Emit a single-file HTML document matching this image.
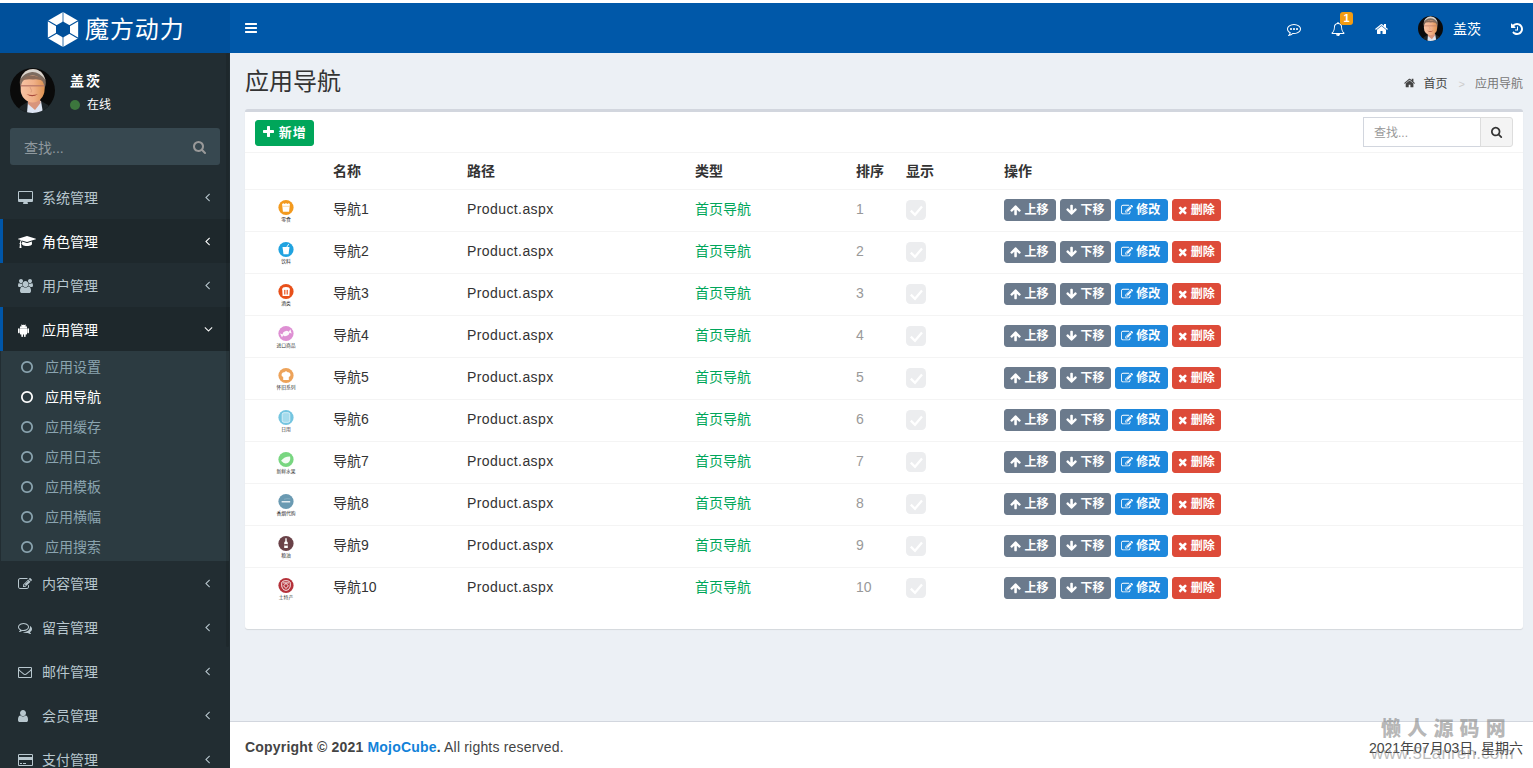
<!DOCTYPE html><html lang="zh-CN"><head><meta charset="utf-8"><title>应用导航</title><style>*{box-sizing:border-box;margin:0;padding:0}
html,body{width:1533px;height:768px;overflow:hidden;background:#fff}
body{font-family:"Liberation Sans","Noto Sans CJK SC",sans-serif;font-size:14px;color:#333;line-height:1.42857}
.wrap{position:absolute;left:0;top:3px;width:1538px;height:765px;background:#ecf0f5;overflow:hidden}
svg.fa{display:inline-block;vertical-align:-2px;overflow:visible}
/* header */
.hdr{position:absolute;left:0;top:0;width:1538px;height:50px;background:#0058a9}
.logo{position:absolute;left:0;top:0;width:230px;height:50px;background:#00509b}
.logo-ic{position:absolute;left:47px;top:8px}
.logo-tx{position:absolute;left:85px;top:10px;font-size:24px;line-height:34px;color:#fff;font-weight:400;letter-spacing:.9px;white-space:nowrap}
.navbar{position:absolute;left:0;top:-3px;width:1538px;height:53px}
.navbar .tog{position:absolute;left:245px;top:21px;line-height:14px}
.navbar .ni{position:absolute;line-height:14px}
.navbar svg.fa{vertical-align:top}
.badge{position:absolute;left:1340px;top:12px;width:13px;height:13px;background:#f39c12;color:#fff;border-radius:3px;font-size:11px;font-weight:700;line-height:13px;text-align:center}
.nav-av{position:absolute;left:1418px;top:16px;width:25px;height:25px}
.nav-av svg{display:block}
.nav-name{position:absolute;left:1453px;top:19px;color:#fff;font-size:14px;line-height:20px}
/* sidebar */
.side{position:absolute;left:0;top:50px;width:230px;height:715px;background:#222d32;overflow:hidden}
.user-img{position:absolute;left:10px;top:15px;width:45px;height:45px}
.user-img svg{display:block}
.user-name{position:absolute;left:70px;top:18px;color:#fff;font-weight:700;font-size:14px;line-height:20px;letter-spacing:2px}
.user-st{position:absolute;left:70px;top:44px;color:#fff;font-size:12px;line-height:16px}
.user-st .dot{display:inline-block;width:10px;height:10px;border-radius:50%;background:#3c763d;margin-right:7px;vertical-align:-1px}
.sform{position:absolute;left:10px;top:75px;width:210px;height:37px;background:#374850;border-radius:3px}
.sform .ph{position:absolute;left:14px;top:10px;color:#8f999e;font-size:14px;line-height:20px}
.sform .sb{position:absolute;left:183px;top:12px;color:#999;line-height:14px}
.sform .sb svg{vertical-align:top}
ul.menu{list-style:none;position:absolute;left:0;top:-53px;width:230px}
.mi{position:absolute;left:0;width:230px;height:44px;border-left:3px solid transparent;color:#b8c7ce}
.mi.act{background:#1e282c;border-left-color:#0056a8;color:#fff}
.mi .ico{position:absolute;left:15px;top:16px;width:20px;line-height:14px;text-align:left}
.mi .ico svg,.mi .arr svg,.si .ico svg{vertical-align:top}
.mi .tx{position:absolute;left:39px;top:13px;font-size:14px;line-height:20px}
.mi .arr{position:absolute;right:20px;top:15px;line-height:14px}
.subbg{position:absolute;left:1px;width:228px;background:#2c3b41}
.si{position:absolute;left:0;width:230px;height:30px;color:#8aa4af}
.si.act{color:#fff}
.si .ico{position:absolute;left:21px;top:9px;line-height:14px}
.si .tx{position:absolute;left:45px;top:6px;font-size:14px;line-height:20px}
/* content */
.cw{position:absolute;left:230px;top:50px;width:1308px;height:668px}
.ptitle{position:absolute;left:15px;top:12px;font-size:24px;font-weight:400;line-height:34px;color:#333}
.bc{position:absolute;right:15px;top:23px;font-size:12px;line-height:17px;color:#444;white-space:nowrap}
.bc svg{vertical-align:-1px;margin-right:8px}
.bc .b2{color:#ccc;margin:0 10px 0 11px;font-size:11px}
.bc .b3{color:#777}
.box{position:absolute;left:15px;top:56px;width:1278px;height:520px;background:#fff;border-top:3px solid #d2d6de;border-radius:3px;box-shadow:0 1px 1px rgba(0,0,0,.1)}
.bh{position:relative;height:41px;border-bottom:1px solid #f4f4f4}
.btn-add{position:absolute;left:10px;top:8px;height:26px;width:59px;background:#00a65a;border:1px solid #00a65a;border-radius:3px;color:#fff;font-weight:700;font-size:13px;line-height:24px;text-align:center;white-space:nowrap;letter-spacing:1px;padding-left:1px}
.srch{position:absolute;left:1118px;top:5px;width:150px;height:30px}
.sin{position:absolute;left:0;top:0;width:118px;height:30px;border:1px solid #d2d6de;border-right:0;font-size:12px;line-height:30px;padding-left:10px;color:#999;border-radius:0}
.sbt{position:absolute;left:117px;top:0;width:33px;height:30px;border:1px solid #ddd;background:#f4f4f4;border-radius:0 3px 3px 0;text-align:center;line-height:26px}
table.tb{border-collapse:collapse;width:1278px;table-layout:fixed}
.tb th,.tb td{text-align:left;padding:0 8px;vertical-align:middle;font-size:14px}
.tb th{height:36px;padding-top:2px;font-weight:700;color:#333;border-bottom:1px solid #f4f4f4}
.tb td{height:42px;border-top:1px solid #f4f4f4}
.tb .c0{width:80px;text-align:center}
.tb td.c2{letter-spacing:.41px}.tb .c1{width:134px}.tb .c2{width:228px}.tb .c3{width:161px}.tb .c4{width:50px}.tb .c5{width:98px}
.tb td.c3{color:#00a65a}
.tb td.c4{color:#999}
.chk{display:inline-block;vertical-align:middle}
.btn{display:inline-block;height:22px;line-height:20px;padding:0 0 0 5px;font-size:12px;font-weight:700;color:#fff;border-radius:3px;margin-right:4px;border:1px solid transparent;white-space:nowrap;vertical-align:middle}
.btn svg{vertical-align:-2px}
.b-gray{background:#6b7a8c;border-color:#6b7a8c}
.b-blue{background:#1e88dc;border-color:#1e88dc}
.b-red{background:#dd4b39;border-color:#dd4b39}
.nicon{display:block;margin:0 auto;position:relative;top:1px;left:1px}
/* footer */
.footer{position:absolute;left:230px;top:718px;width:1308px;height:50px;background:#fff;border-top:1px solid #d2d6de;color:#444;font-size:14px}
.footer .fl{position:absolute;left:15px;top:15px;line-height:20px;letter-spacing:.19px;white-space:nowrap}
.footer .lk{color:#1282d9}
.footer .fr{position:absolute;right:15px;top:16px;line-height:20px;white-space:nowrap}
.wm1{position:absolute;left:1151px;top:-7px;font-size:20px;font-weight:900;letter-spacing:6.2px;color:rgba(120,120,120,.55);white-space:nowrap;line-height:28px}
.wm2{position:absolute;left:1141px;top:21px;font-size:17px;letter-spacing:.2px;color:rgba(120,120,120,.5);white-space:nowrap;line-height:22px}
.sbar{position:absolute;left:226px;top:0;width:3px;height:594px;background:rgba(0,0,0,.11);border-radius:7px}
</style></head><body><div class="wrap"><div class="hdr"><div class="logo"><svg class="logo-ic" width="32" height="37" viewBox="-16 -18.5 32 37"><polygon points="0.00,-17.50 15.16,-8.75 15.16,8.75 0.00,17.50 -15.16,8.75 -15.16,-8.75" fill="#fff"/><polygon points="0.00,-8.10 7.01,-4.05 7.01,4.05 0.00,8.10 -7.01,4.05 -7.01,-4.05" fill="#00509b"/><line x1="0" y1="0" x2="0.00" y2="-18.00" stroke="#00509b" stroke-width="0.8"/><line x1="0" y1="0" x2="15.59" y2="-9.00" stroke="#00509b" stroke-width="1.1"/><line x1="0" y1="0" x2="15.59" y2="9.00" stroke="#00509b" stroke-width="1.1"/><line x1="0" y1="0" x2="0.00" y2="18.00" stroke="#00509b" stroke-width="0.8"/><line x1="0" y1="0" x2="-15.59" y2="9.00" stroke="#00509b" stroke-width="1.1"/><line x1="0" y1="0" x2="-15.59" y2="-9.00" stroke="#00509b" stroke-width="1.1"/></svg><span class="logo-tx">魔方动力</span></div><div class="navbar"><span class="tog"><svg class="fa" width="12.00" height="14" viewBox="0 0 1536 1792" style=""><path fill="#fff" d="M1536 1344V1472Q1536 1498 1517 1517Q1498 1536 1472 1536H64Q38 1536 19 1517Q0 1498 0 1472V1344Q0 1318 19 1299Q38 1280 64 1280H1472Q1498 1280 1517 1299Q1536 1318 1536 1344ZM1536 832V960Q1536 986 1517 1005Q1498 1024 1472 1024H64Q38 1024 19 1005Q0 986 0 960V832Q0 806 19 787Q38 768 64 768H1472Q1498 768 1517 787Q1536 806 1536 832ZM1536 320V448Q1536 474 1517 493Q1498 512 1472 512H64Q38 512 19 493Q0 474 0 448V320Q0 294 19 275Q38 256 64 256H1472Q1498 256 1517 275Q1536 294 1536 320Z"/></svg></span><span class="ni" style="left:1287px;top:22px"><svg class="fa" width="14.00" height="14" viewBox="0 0 1792 1792" style=""><path fill="#fff" d="M602 806Q640 843 640 896Q640 949 602 986Q565 1024 512 1024Q459 1024 422 986Q384 949 384 896Q384 843 422 806Q459 768 512 768Q565 768 602 806ZM986 806Q1024 843 1024 896Q1024 949 986 986Q949 1024 896 1024Q843 1024 806 986Q768 949 768 896Q768 843 806 806Q843 768 896 768Q949 768 986 806ZM1370 806Q1408 843 1408 896Q1408 949 1370 986Q1333 1024 1280 1024Q1227 1024 1190 986Q1152 949 1152 896Q1152 843 1190 806Q1227 768 1280 768Q1333 768 1370 806ZM128 896Q128 1008 200 1110Q271 1211 401 1285L488 1335L461 1431Q437 1522 391 1603Q543 1540 666 1432L709 1394L766 1400Q835 1408 896 1408Q1100 1408 1278 1338Q1455 1269 1560 1151Q1664 1033 1664 896Q1664 759 1560 641Q1455 523 1278 454Q1100 384 896 384Q692 384 514 454Q337 523 232 641Q128 759 128 896ZM1792 896Q1792 1070 1672 1218Q1552 1365 1346 1450Q1140 1536 896 1536Q826 1536 751 1528Q553 1703 291 1770Q242 1784 177 1792H172Q157 1792 145 1782Q133 1771 129 1754V1753Q126 1749 128 1741Q131 1733 130 1731Q130 1729 135 1722Q140 1714 141 1712Q142 1711 148 1704Q154 1697 156 1695Q163 1687 187 1660Q211 1634 222 1622Q232 1611 252 1583Q273 1555 285 1532Q297 1509 312 1473Q327 1437 338 1397Q181 1308 90 1177Q0 1046 0 896Q0 766 71 648Q142 529 262 443Q382 357 548 306Q714 256 896 256Q1078 256 1244 306Q1410 357 1530 443Q1650 529 1721 648Q1792 766 1792 896Z"/></svg></span><span class="ni" style="left:1331px;top:22px"><svg class="fa" width="14.00" height="14" viewBox="0 0 1792 1792" style=""><path fill="#fff" d="M896 1680Q837 1680 794 1638Q752 1595 752 1536Q752 1520 736 1520Q720 1520 720 1536Q720 1609 772 1660Q823 1712 896 1712Q912 1712 912 1696Q912 1680 896 1680ZM246 1408H1546Q1280 1108 1280 576Q1280 525 1256 471Q1232 417 1187 368Q1142 319 1066 288Q989 256 896 256Q803 256 726 288Q650 319 605 368Q560 417 536 471Q512 525 512 576Q512 1108 246 1408ZM1728 1408Q1728 1460 1690 1498Q1652 1536 1600 1536H1152Q1152 1642 1077 1717Q1002 1792 896 1792Q790 1792 715 1717Q640 1642 640 1536H192Q140 1536 102 1498Q64 1460 64 1408Q114 1366 155 1320Q196 1274 240 1200Q284 1127 314 1042Q345 957 364 836Q384 715 384 576Q384 424 501 294Q618 163 808 135Q800 116 800 96Q800 56 828 28Q856 0 896 0Q936 0 964 28Q992 56 992 96Q992 116 984 135Q1174 163 1291 294Q1408 424 1408 576Q1408 715 1428 836Q1447 957 1478 1042Q1508 1127 1552 1200Q1596 1274 1637 1320Q1678 1366 1728 1408Z"/></svg></span><span class="badge">1</span><span class="ni" style="left:1375px;top:22px"><svg class="fa" width="13.00" height="14" viewBox="0 0 1664 1792" style=""><path fill="#fff" d="M1408 992V1472Q1408 1498 1389 1517Q1370 1536 1344 1536H960V1152H704V1536H320Q294 1536 275 1517Q256 1498 256 1472V992Q256 991 256 989Q257 987 257 986L832 512L1407 986Q1408 988 1408 992ZM1631 923 1569 997Q1561 1006 1548 1008H1545Q1532 1008 1524 1001L832 424L140 1001Q128 1009 116 1008Q103 1006 95 997L33 923Q25 913 26 900Q27 886 37 878L756 279Q788 253 832 253Q876 253 908 279L1152 483V288Q1152 274 1161 265Q1170 256 1184 256H1376Q1390 256 1399 265Q1408 274 1408 288V696L1627 878Q1637 886 1638 900Q1639 913 1631 923Z"/></svg></span><span class="nav-av"><svg class="avatar na" width="25" height="25" viewBox="0 0 45 45"><defs><clipPath id="cna"><circle cx="22.5" cy="22.5" r="22.5"/></clipPath><linearGradient id="gna" x1="0" x2="1" y1="0" y2="0"><stop offset="0" stop-color="#f7c3a4"/><stop offset=".55" stop-color="#f0b088"/><stop offset="1" stop-color="#dc9250"/></linearGradient></defs><g clip-path="url(#cna)"><rect width="45" height="45" fill="#0a0a0a"/><path d="M5 45 L11 38 L19 33 L31 33 L38 37 L43 45 Z" fill="#1d2428"/><path d="M17 45 L18 33 L31 33 L33 45 Z" fill="#dde5f3"/><path d="M18 29 L30 29 L30.5 35 L25 42 L18 36 Z" fill="#d8957c"/><ellipse cx="22.8" cy="14.5" rx="13" ry="13.5" fill="#7d6c60"/><path d="M10.5 11 Q14 1 23 1 Q32 1 35.5 12 Q29 3.5 22 4 Q15 4.5 10.5 11 Z" fill="#d8d3cc"/><ellipse cx="22.6" cy="21" rx="12" ry="13.6" fill="url(#gna)"/><path d="M11 13 Q16 6.5 23 8 Q30 7 34.5 14 Q30 10.5 23 11.5 Q16 10.5 11 13 Z" fill="#8a6a58"/><rect x="10.5" y="17" width="24" height="1.5" rx=".7" fill="#b87868" opacity=".85"/><path d="M16.5 26 Q22 30.5 28 26 Q22 28 16.5 26Z" fill="#a84a3c"/><path d="M20 19 Q22.5 23 21 24.5" stroke="#d89a78" stroke-width=".9" fill="none"/></g></svg></span><span class="nav-name">盖茨</span><span class="ni" style="left:1511px;top:22px"><svg class="fa" width="12.00" height="14" viewBox="0 0 1536 1792" style=""><path fill="#fff" d="M768 1664Q596 1664 441 1592Q286 1519 177 1387Q170 1377 170 1364Q171 1352 179 1344L316 1206Q326 1197 341 1197Q357 1199 364 1209Q437 1304 543 1356Q649 1408 768 1408Q872 1408 966 1368Q1061 1327 1130 1258Q1199 1189 1240 1094Q1280 1000 1280 896Q1280 792 1240 698Q1199 603 1130 534Q1061 465 966 424Q872 384 768 384Q670 384 580 420Q490 455 420 521L557 659Q588 689 571 728Q554 768 512 768H64Q38 768 19 749Q0 730 0 704V256Q0 214 40 197Q79 180 109 211L239 340Q346 239 484 184Q621 128 768 128Q924 128 1066 189Q1208 250 1311 353Q1414 456 1475 598Q1536 740 1536 896Q1536 1052 1475 1194Q1414 1336 1311 1439Q1208 1542 1066 1603Q924 1664 768 1664ZM896 608V1056Q896 1070 887 1079Q878 1088 864 1088H544Q530 1088 521 1079Q512 1070 512 1056V992Q512 978 521 969Q530 960 544 960H768V608Q768 594 777 585Q786 576 800 576H864Q878 576 887 585Q896 594 896 608Z"/></svg></span></div></div><div class="side"><div class="user-img"><svg class="avatar ua" width="45" height="45" viewBox="0 0 45 45"><defs><clipPath id="cua"><circle cx="22.5" cy="22.5" r="22.5"/></clipPath><linearGradient id="gua" x1="0" x2="1" y1="0" y2="0"><stop offset="0" stop-color="#f7c3a4"/><stop offset=".55" stop-color="#f0b088"/><stop offset="1" stop-color="#dc9250"/></linearGradient></defs><g clip-path="url(#cua)"><rect width="45" height="45" fill="#0a0a0a"/><path d="M5 45 L11 38 L19 33 L31 33 L38 37 L43 45 Z" fill="#1d2428"/><path d="M17 45 L18 33 L31 33 L33 45 Z" fill="#dde5f3"/><path d="M18 29 L30 29 L30.5 35 L25 42 L18 36 Z" fill="#d8957c"/><ellipse cx="22.8" cy="14.5" rx="13" ry="13.5" fill="#7d6c60"/><path d="M10.5 11 Q14 1 23 1 Q32 1 35.5 12 Q29 3.5 22 4 Q15 4.5 10.5 11 Z" fill="#d8d3cc"/><ellipse cx="22.6" cy="21" rx="12" ry="13.6" fill="url(#gua)"/><path d="M11 13 Q16 6.5 23 8 Q30 7 34.5 14 Q30 10.5 23 11.5 Q16 10.5 11 13 Z" fill="#8a6a58"/><rect x="10.5" y="17" width="24" height="1.5" rx=".7" fill="#b87868" opacity=".85"/><path d="M16.5 26 Q22 30.5 28 26 Q22 28 16.5 26Z" fill="#a84a3c"/><path d="M20 19 Q22.5 23 21 24.5" stroke="#d89a78" stroke-width=".9" fill="none"/></g></svg></div><div class="user-name">盖茨</div><div class="user-st"><span class="dot"></span>在线</div><div class="sform"><span class="ph">查找...</span><span class="sb"><svg class="fa" width="13.00" height="14" viewBox="0 0 1664 1792" style=""><path fill="currentColor" d="M1020 1148Q1152 1017 1152 832Q1152 647 1020 516Q889 384 704 384Q519 384 388 516Q256 647 256 832Q256 1017 388 1148Q519 1280 704 1280Q889 1280 1020 1148ZM1664 1664Q1664 1716 1626 1754Q1588 1792 1536 1792Q1482 1792 1446 1754L1103 1412Q924 1536 704 1536Q561 1536 430 1480Q300 1425 206 1330Q111 1236 56 1106Q0 975 0 832Q0 689 56 558Q111 428 206 334Q300 239 430 184Q561 128 704 128Q847 128 978 184Q1108 239 1202 334Q1297 428 1352 558Q1408 689 1408 832Q1408 1052 1284 1231L1627 1574Q1664 1611 1664 1664Z"/></svg></span></div><ul class="menu"><li class="mi" style="top:175px"><span class="ico"><svg class="fa" width="15.00" height="14" viewBox="0 0 1920 1792" style=""><path fill="currentColor" d="M1792 992V160Q1792 147 1782 138Q1773 128 1760 128H160Q147 128 138 138Q128 147 128 160V992Q128 1005 138 1014Q147 1024 160 1024H1760Q1773 1024 1782 1014Q1792 1005 1792 992ZM1920 160V1248Q1920 1314 1873 1361Q1826 1408 1760 1408H1216Q1216 1445 1232 1486Q1248 1526 1264 1556Q1280 1587 1280 1600Q1280 1626 1261 1645Q1242 1664 1216 1664H704Q678 1664 659 1645Q640 1626 640 1600Q640 1586 656 1556Q672 1526 688 1486Q704 1446 704 1408H160Q94 1408 47 1361Q0 1314 0 1248V160Q0 94 47 47Q94 0 160 0H1760Q1826 0 1873 47Q1920 94 1920 160Z"/></svg></span><span class="tx">系统管理</span><span class="arr"><svg class="fa" width="5.00" height="14" viewBox="0 0 640 1792" style=""><path fill="currentColor" d="M617 567 224 960 617 1353Q627 1363 627 1376Q627 1389 617 1399L567 1449Q557 1459 544 1459Q531 1459 521 1449L55 983Q45 973 45 960Q45 947 55 937L521 471Q531 461 544 461Q557 461 567 471L617 521Q627 531 627 544Q627 557 617 567Z"/></svg></span></li><li class="mi act" style="top:219px"><span class="ico"><svg class="fa" width="18.00" height="14" viewBox="0 0 2304 1792" style=""><path fill="currentColor" d="M1774 836 1792 1152Q1796 1221 1710 1280Q1624 1339 1475 1374Q1326 1408 1152 1408Q978 1408 829 1374Q680 1339 594 1280Q508 1221 512 1152L530 836L1104 1017Q1126 1024 1152 1024Q1178 1024 1200 1017ZM2282 543 1162 895Q1158 896 1152 896Q1146 896 1142 895L490 689Q447 723 419 800Q391 878 385 979Q448 1015 448 1088Q448 1157 390 1195L448 1628Q450 1642 440 1653Q431 1664 416 1664H224Q209 1664 200 1653Q190 1642 192 1628L250 1195Q192 1157 192 1088Q192 1015 257 977Q268 770 355 647L22 543Q0 535 0 512Q0 489 22 481L1142 129Q1146 128 1152 128Q1158 128 1162 129L2282 481Q2304 489 2304 512Q2304 535 2282 543Z"/></svg></span><span class="tx">角色管理</span><span class="arr"><svg class="fa" width="5.00" height="14" viewBox="0 0 640 1792" style=""><path fill="currentColor" d="M617 567 224 960 617 1353Q627 1363 627 1376Q627 1389 617 1399L567 1449Q557 1459 544 1459Q531 1459 521 1449L55 983Q45 973 45 960Q45 947 55 937L521 471Q531 461 544 461Q557 461 567 471L617 521Q627 531 627 544Q627 557 617 567Z"/></svg></span></li><li class="mi" style="top:263px"><span class="ico"><svg class="fa" width="15.00" height="14" viewBox="0 0 1920 1792" style=""><path fill="currentColor" d="M593 896Q431 901 328 1024H194Q112 1024 56 984Q0 943 0 865Q0 512 124 512Q130 512 168 533Q205 554 265 576Q325 597 384 597Q451 597 517 574Q512 611 512 640Q512 779 593 896ZM1664 1533Q1664 1653 1591 1722Q1518 1792 1397 1792H523Q402 1792 329 1722Q256 1653 256 1533Q256 1480 260 1430Q263 1379 274 1320Q284 1262 300 1212Q316 1162 343 1114Q370 1067 405 1034Q440 1000 490 980Q541 960 602 960Q612 960 645 982Q678 1003 718 1030Q758 1056 825 1078Q892 1099 960 1099Q1028 1099 1095 1078Q1162 1056 1202 1030Q1242 1003 1275 982Q1308 960 1318 960Q1379 960 1430 980Q1480 1000 1515 1034Q1550 1067 1577 1114Q1604 1162 1620 1212Q1636 1262 1646 1320Q1657 1379 1660 1430Q1664 1480 1664 1533ZM565 75Q640 150 640 256Q640 362 565 437Q490 512 384 512Q278 512 203 437Q128 362 128 256Q128 150 203 75Q278 0 384 0Q490 0 565 75ZM1232 368Q1344 481 1344 640Q1344 799 1232 912Q1119 1024 960 1024Q801 1024 688 912Q576 799 576 640Q576 481 688 368Q801 256 960 256Q1119 256 1232 368ZM1920 865Q1920 943 1864 984Q1808 1024 1726 1024H1592Q1489 901 1327 896Q1408 779 1408 640Q1408 611 1403 574Q1469 597 1536 597Q1595 597 1655 576Q1715 554 1752 533Q1790 512 1796 512Q1920 512 1920 865ZM1717 75Q1792 150 1792 256Q1792 362 1717 437Q1642 512 1536 512Q1430 512 1355 437Q1280 362 1280 256Q1280 150 1355 75Q1430 0 1536 0Q1642 0 1717 75Z"/></svg></span><span class="tx">用户管理</span><span class="arr"><svg class="fa" width="5.00" height="14" viewBox="0 0 640 1792" style=""><path fill="currentColor" d="M617 567 224 960 617 1353Q627 1363 627 1376Q627 1389 617 1399L567 1449Q557 1459 544 1459Q531 1459 521 1449L55 983Q45 973 45 960Q45 947 55 937L521 471Q531 461 544 461Q557 461 567 471L617 521Q627 531 627 544Q627 557 617 567Z"/></svg></span></li><li class="mi act" style="top:307px"><span class="ico"><svg class="fa" width="11.00" height="14" viewBox="0 0 1408 1792" style=""><path fill="currentColor" d="M466 472Q477 483 493 483Q509 483 520 472Q532 460 532 444Q532 428 520 416Q509 405 493 405Q477 405 466 416Q455 428 455 444Q455 460 466 472ZM888 472Q899 483 915 483Q931 483 942 472Q953 460 953 444Q953 428 942 416Q931 405 915 405Q899 405 888 416Q876 428 876 444Q876 460 888 472ZM103 667Q145 667 175 697Q205 727 205 769V1199Q205 1242 176 1272Q146 1302 103 1302Q60 1302 30 1272Q0 1242 0 1199V769Q0 727 30 697Q60 667 103 667ZM1163 686V1352Q1163 1398 1131 1430Q1099 1462 1054 1462H979V1689Q979 1732 949 1762Q919 1792 876 1792Q833 1792 803 1762Q773 1732 773 1689V1462H635V1689Q635 1732 605 1762Q575 1792 532 1792Q490 1792 460 1762Q430 1732 430 1689L429 1462H355Q309 1462 277 1430Q245 1398 245 1352V686ZM931 281Q1038 336 1102 434Q1166 533 1166 650H241Q241 533 305 434Q369 336 477 281L406 150Q399 137 411 130Q424 124 431 136L503 268Q598 226 704 226Q810 226 905 268L977 136Q984 124 997 130Q1009 137 1002 150ZM1408 769V1199Q1408 1242 1378 1272Q1348 1302 1305 1302Q1263 1302 1233 1272Q1203 1242 1203 1199V769Q1203 726 1233 696Q1263 667 1305 667Q1348 667 1378 696Q1408 726 1408 769Z"/></svg></span><span class="tx">应用管理</span><span class="arr"><svg class="fa" width="9.00" height="14" viewBox="0 0 1152 1792" style="margin-right:-2.5px"><path fill="currentColor" d="M1065 759 599 1225Q589 1235 576 1235Q563 1235 553 1225L87 759Q77 749 77 736Q77 723 87 713L137 663Q147 653 160 653Q173 653 183 663L576 1056L969 663Q979 653 992 653Q1005 653 1015 663L1065 713Q1075 723 1075 736Q1075 749 1065 759Z"/></svg></span></li><li class="subbg" style="top:351px;height:210px"></li><li class="si" style="top:351px"><span class="ico"><svg class="fa" width="12.00" height="14" viewBox="0 0 1536 1792" style=""><path fill="currentColor" d="M1041 425Q916 352 768 352Q620 352 495 425Q370 498 297 623Q224 748 224 896Q224 1044 297 1169Q370 1294 495 1367Q620 1440 768 1440Q916 1440 1041 1367Q1166 1294 1239 1169Q1312 1044 1312 896Q1312 748 1239 623Q1166 498 1041 425ZM1433 510Q1536 687 1536 896Q1536 1105 1433 1282Q1330 1458 1154 1561Q977 1664 768 1664Q559 1664 382 1561Q206 1458 103 1282Q0 1105 0 896Q0 687 103 510Q206 334 382 231Q559 128 768 128Q977 128 1154 231Q1330 334 1433 510Z"/></svg></span><span class="tx">应用设置</span></li><li class="si act" style="top:381px"><span class="ico"><svg class="fa" width="12.00" height="14" viewBox="0 0 1536 1792" style=""><path fill="currentColor" d="M1041 425Q916 352 768 352Q620 352 495 425Q370 498 297 623Q224 748 224 896Q224 1044 297 1169Q370 1294 495 1367Q620 1440 768 1440Q916 1440 1041 1367Q1166 1294 1239 1169Q1312 1044 1312 896Q1312 748 1239 623Q1166 498 1041 425ZM1433 510Q1536 687 1536 896Q1536 1105 1433 1282Q1330 1458 1154 1561Q977 1664 768 1664Q559 1664 382 1561Q206 1458 103 1282Q0 1105 0 896Q0 687 103 510Q206 334 382 231Q559 128 768 128Q977 128 1154 231Q1330 334 1433 510Z"/></svg></span><span class="tx">应用导航</span></li><li class="si" style="top:411px"><span class="ico"><svg class="fa" width="12.00" height="14" viewBox="0 0 1536 1792" style=""><path fill="currentColor" d="M1041 425Q916 352 768 352Q620 352 495 425Q370 498 297 623Q224 748 224 896Q224 1044 297 1169Q370 1294 495 1367Q620 1440 768 1440Q916 1440 1041 1367Q1166 1294 1239 1169Q1312 1044 1312 896Q1312 748 1239 623Q1166 498 1041 425ZM1433 510Q1536 687 1536 896Q1536 1105 1433 1282Q1330 1458 1154 1561Q977 1664 768 1664Q559 1664 382 1561Q206 1458 103 1282Q0 1105 0 896Q0 687 103 510Q206 334 382 231Q559 128 768 128Q977 128 1154 231Q1330 334 1433 510Z"/></svg></span><span class="tx">应用缓存</span></li><li class="si" style="top:441px"><span class="ico"><svg class="fa" width="12.00" height="14" viewBox="0 0 1536 1792" style=""><path fill="currentColor" d="M1041 425Q916 352 768 352Q620 352 495 425Q370 498 297 623Q224 748 224 896Q224 1044 297 1169Q370 1294 495 1367Q620 1440 768 1440Q916 1440 1041 1367Q1166 1294 1239 1169Q1312 1044 1312 896Q1312 748 1239 623Q1166 498 1041 425ZM1433 510Q1536 687 1536 896Q1536 1105 1433 1282Q1330 1458 1154 1561Q977 1664 768 1664Q559 1664 382 1561Q206 1458 103 1282Q0 1105 0 896Q0 687 103 510Q206 334 382 231Q559 128 768 128Q977 128 1154 231Q1330 334 1433 510Z"/></svg></span><span class="tx">应用日志</span></li><li class="si" style="top:471px"><span class="ico"><svg class="fa" width="12.00" height="14" viewBox="0 0 1536 1792" style=""><path fill="currentColor" d="M1041 425Q916 352 768 352Q620 352 495 425Q370 498 297 623Q224 748 224 896Q224 1044 297 1169Q370 1294 495 1367Q620 1440 768 1440Q916 1440 1041 1367Q1166 1294 1239 1169Q1312 1044 1312 896Q1312 748 1239 623Q1166 498 1041 425ZM1433 510Q1536 687 1536 896Q1536 1105 1433 1282Q1330 1458 1154 1561Q977 1664 768 1664Q559 1664 382 1561Q206 1458 103 1282Q0 1105 0 896Q0 687 103 510Q206 334 382 231Q559 128 768 128Q977 128 1154 231Q1330 334 1433 510Z"/></svg></span><span class="tx">应用模板</span></li><li class="si" style="top:501px"><span class="ico"><svg class="fa" width="12.00" height="14" viewBox="0 0 1536 1792" style=""><path fill="currentColor" d="M1041 425Q916 352 768 352Q620 352 495 425Q370 498 297 623Q224 748 224 896Q224 1044 297 1169Q370 1294 495 1367Q620 1440 768 1440Q916 1440 1041 1367Q1166 1294 1239 1169Q1312 1044 1312 896Q1312 748 1239 623Q1166 498 1041 425ZM1433 510Q1536 687 1536 896Q1536 1105 1433 1282Q1330 1458 1154 1561Q977 1664 768 1664Q559 1664 382 1561Q206 1458 103 1282Q0 1105 0 896Q0 687 103 510Q206 334 382 231Q559 128 768 128Q977 128 1154 231Q1330 334 1433 510Z"/></svg></span><span class="tx">应用横幅</span></li><li class="si" style="top:531px"><span class="ico"><svg class="fa" width="12.00" height="14" viewBox="0 0 1536 1792" style=""><path fill="currentColor" d="M1041 425Q916 352 768 352Q620 352 495 425Q370 498 297 623Q224 748 224 896Q224 1044 297 1169Q370 1294 495 1367Q620 1440 768 1440Q916 1440 1041 1367Q1166 1294 1239 1169Q1312 1044 1312 896Q1312 748 1239 623Q1166 498 1041 425ZM1433 510Q1536 687 1536 896Q1536 1105 1433 1282Q1330 1458 1154 1561Q977 1664 768 1664Q559 1664 382 1561Q206 1458 103 1282Q0 1105 0 896Q0 687 103 510Q206 334 382 231Q559 128 768 128Q977 128 1154 231Q1330 334 1433 510Z"/></svg></span><span class="tx">应用搜索</span></li><li class="mi" style="top:561px"><span class="ico"><svg class="fa" width="14.00" height="14" viewBox="0 0 1792 1792" style=""><path fill="currentColor" d="M888 1184 1004 1068 852 916 736 1032V1088H832V1184ZM1295 465 945 815Q928 832 944 848Q960 864 977 847L1327 497Q1344 480 1328 464Q1312 448 1295 465ZM1408 1058V1248Q1408 1367 1324 1452Q1239 1536 1120 1536H288Q169 1536 84 1452Q0 1367 0 1248V416Q0 297 84 212Q169 128 288 128H1120Q1183 128 1237 153Q1252 160 1255 176Q1258 193 1246 205L1197 254Q1183 268 1165 262Q1142 256 1120 256H288Q222 256 175 303Q128 350 128 416V1248Q128 1314 175 1361Q222 1408 288 1408H1120Q1186 1408 1233 1361Q1280 1314 1280 1248V1122Q1280 1109 1289 1100L1353 1036Q1368 1021 1388 1029Q1408 1037 1408 1058ZM1312 320 1600 608 928 1280H640V992ZM1756 452 1664 544 1376 256 1468 164Q1496 136 1536 136Q1576 136 1604 164L1756 316Q1784 344 1784 384Q1784 424 1756 452Z"/></svg></span><span class="tx">内容管理</span><span class="arr"><svg class="fa" width="5.00" height="14" viewBox="0 0 640 1792" style=""><path fill="currentColor" d="M617 567 224 960 617 1353Q627 1363 627 1376Q627 1389 617 1399L567 1449Q557 1459 544 1459Q531 1459 521 1449L55 983Q45 973 45 960Q45 947 55 937L521 471Q531 461 544 461Q557 461 567 471L617 521Q627 531 627 544Q627 557 617 567Z"/></svg></span></li><li class="mi" style="top:605px"><span class="ico"><svg class="fa" width="14.00" height="14" viewBox="0 0 1792 1792" style=""><path fill="currentColor" d="M128 768Q128 850 181 926Q234 1002 330 1058L427 1114L392 1198Q426 1178 454 1159L498 1128L551 1138Q629 1152 704 1152Q857 1152 990 1100Q1123 1048 1202 959Q1280 870 1280 768Q1280 666 1202 577Q1123 488 990 436Q857 384 704 384Q551 384 418 436Q285 488 206 577Q128 666 128 768ZM704 1280Q618 1280 528 1264Q404 1352 250 1392Q214 1401 164 1408H161Q150 1408 140 1400Q131 1392 129 1379Q128 1376 128 1372Q128 1369 128 1366Q129 1363 130 1360Q132 1357 133 1355Q134 1353 136 1350Q139 1346 140 1344Q142 1343 145 1340Q148 1336 149 1335Q154 1329 172 1310Q190 1291 198 1280Q206 1270 220 1252Q235 1233 246 1213Q256 1193 266 1169Q142 1097 71 992Q0 887 0 768Q0 629 94 511Q188 393 350 324Q513 256 704 256Q895 256 1058 324Q1220 393 1314 511Q1408 629 1408 768Q1408 907 1314 1025Q1220 1143 1058 1212Q895 1280 704 1280ZM1526 1425Q1536 1449 1546 1469Q1557 1489 1572 1508Q1586 1526 1594 1536Q1602 1547 1620 1566Q1638 1585 1643 1591Q1644 1592 1647 1596Q1650 1599 1652 1600Q1653 1602 1656 1606Q1658 1609 1659 1611Q1660 1613 1662 1616Q1663 1619 1664 1622Q1664 1625 1664 1628Q1664 1632 1663 1635Q1660 1649 1650 1657Q1640 1665 1628 1664Q1578 1657 1542 1648Q1388 1608 1264 1520Q1174 1536 1088 1536Q817 1536 616 1404Q674 1408 704 1408Q865 1408 1013 1363Q1161 1318 1277 1234Q1402 1142 1469 1022Q1536 902 1536 768Q1536 691 1513 616Q1642 687 1717 794Q1792 901 1792 1024Q1792 1144 1721 1248Q1650 1353 1526 1425Z"/></svg></span><span class="tx">留言管理</span><span class="arr"><svg class="fa" width="5.00" height="14" viewBox="0 0 640 1792" style=""><path fill="currentColor" d="M617 567 224 960 617 1353Q627 1363 627 1376Q627 1389 617 1399L567 1449Q557 1459 544 1459Q531 1459 521 1449L55 983Q45 973 45 960Q45 947 55 937L521 471Q531 461 544 461Q557 461 567 471L617 521Q627 531 627 544Q627 557 617 567Z"/></svg></span></li><li class="mi" style="top:649px"><span class="ico"><svg class="fa" width="14.00" height="14" viewBox="0 0 1792 1792" style=""><path fill="currentColor" d="M1664 1504V736Q1632 772 1595 802Q1327 1008 1169 1140Q1118 1183 1086 1207Q1054 1231 1000 1256Q945 1280 897 1280H896H895Q847 1280 792 1256Q738 1231 706 1207Q674 1183 623 1140Q465 1008 197 802Q160 772 128 736V1504Q128 1517 138 1526Q147 1536 160 1536H1632Q1645 1536 1654 1526Q1664 1517 1664 1504ZM1664 453Q1664 451 1664 442Q1664 433 1664 428Q1664 424 1664 416Q1663 407 1660 403Q1658 399 1655 394Q1652 389 1646 386Q1640 384 1632 384H160Q147 384 138 394Q128 403 128 416Q128 584 275 700Q468 852 676 1017Q682 1022 711 1046Q740 1071 757 1084Q774 1097 802 1116Q829 1134 852 1143Q875 1152 895 1152H896H897Q917 1152 940 1143Q963 1134 990 1116Q1018 1097 1035 1084Q1052 1071 1081 1046Q1110 1022 1116 1017Q1324 852 1517 700Q1571 657 1618 584Q1664 512 1664 453ZM1792 416V1504Q1792 1570 1745 1617Q1698 1664 1632 1664H160Q94 1664 47 1617Q0 1570 0 1504V416Q0 350 47 303Q94 256 160 256H1632Q1698 256 1745 303Q1792 350 1792 416Z"/></svg></span><span class="tx">邮件管理</span><span class="arr"><svg class="fa" width="5.00" height="14" viewBox="0 0 640 1792" style=""><path fill="currentColor" d="M617 567 224 960 617 1353Q627 1363 627 1376Q627 1389 617 1399L567 1449Q557 1459 544 1459Q531 1459 521 1449L55 983Q45 973 45 960Q45 947 55 937L521 471Q531 461 544 461Q557 461 567 471L617 521Q627 531 627 544Q627 557 617 567Z"/></svg></span></li><li class="mi" style="top:693px"><span class="ico"><svg class="fa" width="10.00" height="14" viewBox="0 0 1280 1792" style=""><path fill="currentColor" d="M1280 1399Q1280 1508 1218 1586Q1155 1664 1067 1664H213Q125 1664 62 1586Q0 1508 0 1399Q0 1314 8 1238Q17 1163 40 1086Q63 1010 98 956Q134 901 192 866Q251 832 327 832Q458 960 640 960Q822 960 953 832Q1029 832 1088 866Q1146 901 1182 956Q1217 1010 1240 1086Q1263 1163 1272 1238Q1280 1314 1280 1399ZM912 240Q1024 353 1024 512Q1024 671 912 784Q799 896 640 896Q481 896 368 784Q256 671 256 512Q256 353 368 240Q481 128 640 128Q799 128 912 240Z"/></svg></span><span class="tx">会员管理</span><span class="arr"><svg class="fa" width="5.00" height="14" viewBox="0 0 640 1792" style=""><path fill="currentColor" d="M617 567 224 960 617 1353Q627 1363 627 1376Q627 1389 617 1399L567 1449Q557 1459 544 1459Q531 1459 521 1449L55 983Q45 973 45 960Q45 947 55 937L521 471Q531 461 544 461Q557 461 567 471L617 521Q627 531 627 544Q627 557 617 567Z"/></svg></span></li><li class="mi" style="top:737px"><span class="ico"><svg class="fa" width="15.00" height="14" viewBox="0 0 1920 1792" style=""><path fill="currentColor" d="M1760 128Q1826 128 1873 175Q1920 222 1920 288V1504Q1920 1570 1873 1617Q1826 1664 1760 1664H160Q94 1664 47 1617Q0 1570 0 1504V288Q0 222 47 175Q94 128 160 128ZM160 256Q147 256 138 266Q128 275 128 288V512H1792V288Q1792 275 1782 266Q1773 256 1760 256ZM1760 1536Q1773 1536 1782 1526Q1792 1517 1792 1504V896H128V1504Q128 1517 138 1526Q147 1536 160 1536ZM256 1408V1280H512V1408ZM640 1408V1280H1024V1408Z"/></svg></span><span class="tx">支付管理</span><span class="arr"><svg class="fa" width="5.00" height="14" viewBox="0 0 640 1792" style=""><path fill="currentColor" d="M617 567 224 960 617 1353Q627 1363 627 1376Q627 1389 617 1399L567 1449Q557 1459 544 1459Q531 1459 521 1449L55 983Q45 973 45 960Q45 947 55 937L521 471Q531 461 544 461Q557 461 567 471L617 521Q627 531 627 544Q627 557 617 567Z"/></svg></span></li></ul><div class="sbar"></div></div><div class="cw"><h1 class="ptitle">应用导航</h1><div class="bc"><svg class="fa" width="11.14" height="12" viewBox="0 0 1664 1792" style=""><path fill="#444" d="M1408 992V1472Q1408 1498 1389 1517Q1370 1536 1344 1536H960V1152H704V1536H320Q294 1536 275 1517Q256 1498 256 1472V992Q256 991 256 989Q257 987 257 986L832 512L1407 986Q1408 988 1408 992ZM1631 923 1569 997Q1561 1006 1548 1008H1545Q1532 1008 1524 1001L832 424L140 1001Q128 1009 116 1008Q103 1006 95 997L33 923Q25 913 26 900Q27 886 37 878L756 279Q788 253 832 253Q876 253 908 279L1152 483V288Q1152 274 1161 265Q1170 256 1184 256H1376Q1390 256 1399 265Q1408 274 1408 288V696L1627 878Q1637 886 1638 900Q1639 913 1631 923Z"/></svg><span class="b1">首页</span><span class="b2">&gt;</span><span class="b3">应用导航</span></div><div class="box"><div class="bh"><span class="btn-add"><svg class="fa" width="11.00" height="14" viewBox="0 0 1408 1792" style=""><path fill="#fff" d="M1408 736V928Q1408 968 1380 996Q1352 1024 1312 1024H896V1440Q896 1480 868 1508Q840 1536 800 1536H608Q568 1536 540 1508Q512 1480 512 1440V1024H96Q56 1024 28 996Q0 968 0 928V736Q0 696 28 668Q56 640 96 640H512V224Q512 184 540 156Q568 128 608 128H800Q840 128 868 156Q896 184 896 224V640H1312Q1352 640 1380 668Q1408 696 1408 736Z"/></svg> 新增</span><div class="srch"><span class="sin">查找...</span><span class="sbt"><svg class="fa" width="11.14" height="12" viewBox="0 0 1664 1792" style=""><path fill="#333" d="M1020 1148Q1152 1017 1152 832Q1152 647 1020 516Q889 384 704 384Q519 384 388 516Q256 647 256 832Q256 1017 388 1148Q519 1280 704 1280Q889 1280 1020 1148ZM1664 1664Q1664 1716 1626 1754Q1588 1792 1536 1792Q1482 1792 1446 1754L1103 1412Q924 1536 704 1536Q561 1536 430 1480Q300 1425 206 1330Q111 1236 56 1106Q0 975 0 832Q0 689 56 558Q111 428 206 334Q300 239 430 184Q561 128 704 128Q847 128 978 184Q1108 239 1202 334Q1297 428 1352 558Q1408 689 1408 832Q1408 1052 1284 1231L1627 1574Q1664 1611 1664 1664Z"/></svg></span></div></div><table class="tb"><thead><tr><th class="c0"></th><th class="c1">名称</th><th class="c2">路径</th><th class="c3">类型</th><th class="c4">排序</th><th class="c5">显示</th><th class="c6">操作</th></tr></thead><tbody><tr><td class="c0"><svg class="nicon" width="40" height="24" viewBox="-20 -8.5 40 24"><circle r="7.6" fill="#f39a1e"/><path fill="#fff" d="M-3.9,-3.6 L-2.6,-4.3 L-1.3,-3.6 L0,-4.4 L1.3,-3.6 L2.6,-4.3 L3.9,-3.6 L3.1,4.3 L-3.1,4.3 Z"/><path d="M-3.6,-1.2 H3.6" stroke="#f8c880" stroke-width=".7"/><text x="0" y="13.6" text-anchor="middle" font-size="4.8" fill="#333">零食</text></svg></td><td class="c1">导航1</td><td class="c2">Product.aspx</td><td class="c3">首页导航</td><td class="c4">1</td><td class="c5"><svg class="chk" width="20" height="20" viewBox="0 0 20 20"><rect width="20" height="20" rx="4.5" fill="#ecedef"/><polyline points="4.8,10.6 9,14.7 16,6.6" fill="none" stroke="#fff" stroke-width="2.3"/></svg></td><td class="c6"><span class="btn b-gray" style="width:52px"><svg class="fa" width="11.14" height="12" viewBox="0 0 1664 1792" style=""><path fill="#fff" d="M1611 971Q1611 1022 1574 1061L1499 1136Q1461 1174 1408 1174Q1354 1174 1318 1136L1024 843V1547Q1024 1599 986 1632Q949 1664 896 1664H768Q715 1664 678 1632Q640 1599 640 1547V843L346 1136Q310 1174 256 1174Q202 1174 166 1136L91 1061Q53 1023 53 971Q53 918 91 880L742 229Q777 192 832 192Q886 192 923 229L1574 880Q1611 919 1611 971Z"/></svg> 上移</span><span class="btn b-gray" style="width:51px"><svg class="fa" width="11.14" height="12" viewBox="0 0 1664 1792" style=""><path fill="#fff" d="M1611 832Q1611 885 1574 922L923 1574Q884 1611 832 1611Q779 1611 742 1574L91 922Q53 886 53 832Q53 779 91 741L165 666Q204 629 256 629Q309 629 346 666L640 960V256Q640 204 678 166Q716 128 768 128H896Q948 128 986 166Q1024 204 1024 256V960L1318 666Q1355 629 1408 629Q1460 629 1499 666L1574 741Q1611 780 1611 832Z"/></svg> 下移</span><span class="btn b-blue" style="width:53px"><svg class="fa" width="12.00" height="12" viewBox="0 0 1792 1792" style=""><path fill="#fff" d="M888 1184 1004 1068 852 916 736 1032V1088H832V1184ZM1295 465 945 815Q928 832 944 848Q960 864 977 847L1327 497Q1344 480 1328 464Q1312 448 1295 465ZM1408 1058V1248Q1408 1367 1324 1452Q1239 1536 1120 1536H288Q169 1536 84 1452Q0 1367 0 1248V416Q0 297 84 212Q169 128 288 128H1120Q1183 128 1237 153Q1252 160 1255 176Q1258 193 1246 205L1197 254Q1183 268 1165 262Q1142 256 1120 256H288Q222 256 175 303Q128 350 128 416V1248Q128 1314 175 1361Q222 1408 288 1408H1120Q1186 1408 1233 1361Q1280 1314 1280 1248V1122Q1280 1109 1289 1100L1353 1036Q1368 1021 1388 1029Q1408 1037 1408 1058ZM1312 320 1600 608 928 1280H640V992ZM1756 452 1664 544 1376 256 1468 164Q1496 136 1536 136Q1576 136 1604 164L1756 316Q1784 344 1784 384Q1784 424 1756 452Z"/></svg> 修改</span><span class="btn b-red" style="width:49px"><svg class="fa" width="9.43" height="12" viewBox="0 0 1408 1792" style=""><path fill="#fff" d="M1270 1390 1134 1526Q1106 1554 1066 1554Q1026 1554 998 1526L704 1232L410 1526Q382 1554 342 1554Q302 1554 274 1526L138 1390Q110 1362 110 1322Q110 1282 138 1254L432 960L138 666Q110 638 110 598Q110 558 138 530L274 394Q302 366 342 366Q382 366 410 394L704 688L998 394Q1026 366 1066 366Q1106 366 1134 394L1270 530Q1298 558 1298 598Q1298 638 1270 666L976 960L1270 1254Q1298 1282 1298 1322Q1298 1362 1270 1390Z"/></svg> 删除</span></td></tr><tr><td class="c0"><svg class="nicon" width="40" height="24" viewBox="-20 -8.5 40 24"><circle r="7.6" fill="#20a3e0"/><path fill="#fff" d="M-3.5,-2.4 L3.5,-2.4 L2.5,4.8 L-2.5,4.8 Z"/><path d="M0.8,-2.4 L2.8,-5.6" stroke="#fff" stroke-width=".9"/><text x="0" y="13.6" text-anchor="middle" font-size="4.8" fill="#333">饮料</text></svg></td><td class="c1">导航2</td><td class="c2">Product.aspx</td><td class="c3">首页导航</td><td class="c4">2</td><td class="c5"><svg class="chk" width="20" height="20" viewBox="0 0 20 20"><rect width="20" height="20" rx="4.5" fill="#ecedef"/><polyline points="4.8,10.6 9,14.7 16,6.6" fill="none" stroke="#fff" stroke-width="2.3"/></svg></td><td class="c6"><span class="btn b-gray" style="width:52px"><svg class="fa" width="11.14" height="12" viewBox="0 0 1664 1792" style=""><path fill="#fff" d="M1611 971Q1611 1022 1574 1061L1499 1136Q1461 1174 1408 1174Q1354 1174 1318 1136L1024 843V1547Q1024 1599 986 1632Q949 1664 896 1664H768Q715 1664 678 1632Q640 1599 640 1547V843L346 1136Q310 1174 256 1174Q202 1174 166 1136L91 1061Q53 1023 53 971Q53 918 91 880L742 229Q777 192 832 192Q886 192 923 229L1574 880Q1611 919 1611 971Z"/></svg> 上移</span><span class="btn b-gray" style="width:51px"><svg class="fa" width="11.14" height="12" viewBox="0 0 1664 1792" style=""><path fill="#fff" d="M1611 832Q1611 885 1574 922L923 1574Q884 1611 832 1611Q779 1611 742 1574L91 922Q53 886 53 832Q53 779 91 741L165 666Q204 629 256 629Q309 629 346 666L640 960V256Q640 204 678 166Q716 128 768 128H896Q948 128 986 166Q1024 204 1024 256V960L1318 666Q1355 629 1408 629Q1460 629 1499 666L1574 741Q1611 780 1611 832Z"/></svg> 下移</span><span class="btn b-blue" style="width:53px"><svg class="fa" width="12.00" height="12" viewBox="0 0 1792 1792" style=""><path fill="#fff" d="M888 1184 1004 1068 852 916 736 1032V1088H832V1184ZM1295 465 945 815Q928 832 944 848Q960 864 977 847L1327 497Q1344 480 1328 464Q1312 448 1295 465ZM1408 1058V1248Q1408 1367 1324 1452Q1239 1536 1120 1536H288Q169 1536 84 1452Q0 1367 0 1248V416Q0 297 84 212Q169 128 288 128H1120Q1183 128 1237 153Q1252 160 1255 176Q1258 193 1246 205L1197 254Q1183 268 1165 262Q1142 256 1120 256H288Q222 256 175 303Q128 350 128 416V1248Q128 1314 175 1361Q222 1408 288 1408H1120Q1186 1408 1233 1361Q1280 1314 1280 1248V1122Q1280 1109 1289 1100L1353 1036Q1368 1021 1388 1029Q1408 1037 1408 1058ZM1312 320 1600 608 928 1280H640V992ZM1756 452 1664 544 1376 256 1468 164Q1496 136 1536 136Q1576 136 1604 164L1756 316Q1784 344 1784 384Q1784 424 1756 452Z"/></svg> 修改</span><span class="btn b-red" style="width:49px"><svg class="fa" width="9.43" height="12" viewBox="0 0 1408 1792" style=""><path fill="#fff" d="M1270 1390 1134 1526Q1106 1554 1066 1554Q1026 1554 998 1526L704 1232L410 1526Q382 1554 342 1554Q302 1554 274 1526L138 1390Q110 1362 110 1322Q110 1282 138 1254L432 960L138 666Q110 638 110 598Q110 558 138 530L274 394Q302 366 342 366Q382 366 410 394L704 688L998 394Q1026 366 1066 366Q1106 366 1134 394L1270 530Q1298 558 1298 598Q1298 638 1270 666L976 960L1270 1254Q1298 1282 1298 1322Q1298 1362 1270 1390Z"/></svg> 删除</span></td></tr><tr><td class="c0"><svg class="nicon" width="40" height="24" viewBox="-20 -8.5 40 24"><circle r="7.6" fill="#e8501a"/><path fill="#fff" d="M-3.8,-2.2 Q-3.8,-4.6 0,-4.6 Q3.8,-4.6 3.8,-2.2 L3.4,4.4 L-3.4,4.4 Z"/><path d="M-1.5,-1.6 V3 M0,-1.6 V3 M1.5,-1.6 V3" stroke="#e8501a" stroke-width=".8"/><text x="0" y="13.6" text-anchor="middle" font-size="4.8" fill="#333">酒类</text></svg></td><td class="c1">导航3</td><td class="c2">Product.aspx</td><td class="c3">首页导航</td><td class="c4">3</td><td class="c5"><svg class="chk" width="20" height="20" viewBox="0 0 20 20"><rect width="20" height="20" rx="4.5" fill="#ecedef"/><polyline points="4.8,10.6 9,14.7 16,6.6" fill="none" stroke="#fff" stroke-width="2.3"/></svg></td><td class="c6"><span class="btn b-gray" style="width:52px"><svg class="fa" width="11.14" height="12" viewBox="0 0 1664 1792" style=""><path fill="#fff" d="M1611 971Q1611 1022 1574 1061L1499 1136Q1461 1174 1408 1174Q1354 1174 1318 1136L1024 843V1547Q1024 1599 986 1632Q949 1664 896 1664H768Q715 1664 678 1632Q640 1599 640 1547V843L346 1136Q310 1174 256 1174Q202 1174 166 1136L91 1061Q53 1023 53 971Q53 918 91 880L742 229Q777 192 832 192Q886 192 923 229L1574 880Q1611 919 1611 971Z"/></svg> 上移</span><span class="btn b-gray" style="width:51px"><svg class="fa" width="11.14" height="12" viewBox="0 0 1664 1792" style=""><path fill="#fff" d="M1611 832Q1611 885 1574 922L923 1574Q884 1611 832 1611Q779 1611 742 1574L91 922Q53 886 53 832Q53 779 91 741L165 666Q204 629 256 629Q309 629 346 666L640 960V256Q640 204 678 166Q716 128 768 128H896Q948 128 986 166Q1024 204 1024 256V960L1318 666Q1355 629 1408 629Q1460 629 1499 666L1574 741Q1611 780 1611 832Z"/></svg> 下移</span><span class="btn b-blue" style="width:53px"><svg class="fa" width="12.00" height="12" viewBox="0 0 1792 1792" style=""><path fill="#fff" d="M888 1184 1004 1068 852 916 736 1032V1088H832V1184ZM1295 465 945 815Q928 832 944 848Q960 864 977 847L1327 497Q1344 480 1328 464Q1312 448 1295 465ZM1408 1058V1248Q1408 1367 1324 1452Q1239 1536 1120 1536H288Q169 1536 84 1452Q0 1367 0 1248V416Q0 297 84 212Q169 128 288 128H1120Q1183 128 1237 153Q1252 160 1255 176Q1258 193 1246 205L1197 254Q1183 268 1165 262Q1142 256 1120 256H288Q222 256 175 303Q128 350 128 416V1248Q128 1314 175 1361Q222 1408 288 1408H1120Q1186 1408 1233 1361Q1280 1314 1280 1248V1122Q1280 1109 1289 1100L1353 1036Q1368 1021 1388 1029Q1408 1037 1408 1058ZM1312 320 1600 608 928 1280H640V992ZM1756 452 1664 544 1376 256 1468 164Q1496 136 1536 136Q1576 136 1604 164L1756 316Q1784 344 1784 384Q1784 424 1756 452Z"/></svg> 修改</span><span class="btn b-red" style="width:49px"><svg class="fa" width="9.43" height="12" viewBox="0 0 1408 1792" style=""><path fill="#fff" d="M1270 1390 1134 1526Q1106 1554 1066 1554Q1026 1554 998 1526L704 1232L410 1526Q382 1554 342 1554Q302 1554 274 1526L138 1390Q110 1362 110 1322Q110 1282 138 1254L432 960L138 666Q110 638 110 598Q110 558 138 530L274 394Q302 366 342 366Q382 366 410 394L704 688L998 394Q1026 366 1066 366Q1106 366 1134 394L1270 530Q1298 558 1298 598Q1298 638 1270 666L976 960L1270 1254Q1298 1282 1298 1322Q1298 1362 1270 1390Z"/></svg> 删除</span></td></tr><tr><td class="c0"><svg class="nicon" width="40" height="24" viewBox="-20 -8.5 40 24"><circle r="7.6" fill="#de8fd3"/><g transform="rotate(-22)" fill="#fff" opacity=".92"><ellipse rx="3.3" ry="2.5"/><path d="M-2.6,0 L-5.6,-2.2 L-5.2,2.2 Z M2.6,0 L5.6,-2.2 L5.2,2.2 Z"/></g><text x="0" y="13.6" text-anchor="middle" font-size="4.8" fill="#333">进口商品</text></svg></td><td class="c1">导航4</td><td class="c2">Product.aspx</td><td class="c3">首页导航</td><td class="c4">4</td><td class="c5"><svg class="chk" width="20" height="20" viewBox="0 0 20 20"><rect width="20" height="20" rx="4.5" fill="#ecedef"/><polyline points="4.8,10.6 9,14.7 16,6.6" fill="none" stroke="#fff" stroke-width="2.3"/></svg></td><td class="c6"><span class="btn b-gray" style="width:52px"><svg class="fa" width="11.14" height="12" viewBox="0 0 1664 1792" style=""><path fill="#fff" d="M1611 971Q1611 1022 1574 1061L1499 1136Q1461 1174 1408 1174Q1354 1174 1318 1136L1024 843V1547Q1024 1599 986 1632Q949 1664 896 1664H768Q715 1664 678 1632Q640 1599 640 1547V843L346 1136Q310 1174 256 1174Q202 1174 166 1136L91 1061Q53 1023 53 971Q53 918 91 880L742 229Q777 192 832 192Q886 192 923 229L1574 880Q1611 919 1611 971Z"/></svg> 上移</span><span class="btn b-gray" style="width:51px"><svg class="fa" width="11.14" height="12" viewBox="0 0 1664 1792" style=""><path fill="#fff" d="M1611 832Q1611 885 1574 922L923 1574Q884 1611 832 1611Q779 1611 742 1574L91 922Q53 886 53 832Q53 779 91 741L165 666Q204 629 256 629Q309 629 346 666L640 960V256Q640 204 678 166Q716 128 768 128H896Q948 128 986 166Q1024 204 1024 256V960L1318 666Q1355 629 1408 629Q1460 629 1499 666L1574 741Q1611 780 1611 832Z"/></svg> 下移</span><span class="btn b-blue" style="width:53px"><svg class="fa" width="12.00" height="12" viewBox="0 0 1792 1792" style=""><path fill="#fff" d="M888 1184 1004 1068 852 916 736 1032V1088H832V1184ZM1295 465 945 815Q928 832 944 848Q960 864 977 847L1327 497Q1344 480 1328 464Q1312 448 1295 465ZM1408 1058V1248Q1408 1367 1324 1452Q1239 1536 1120 1536H288Q169 1536 84 1452Q0 1367 0 1248V416Q0 297 84 212Q169 128 288 128H1120Q1183 128 1237 153Q1252 160 1255 176Q1258 193 1246 205L1197 254Q1183 268 1165 262Q1142 256 1120 256H288Q222 256 175 303Q128 350 128 416V1248Q128 1314 175 1361Q222 1408 288 1408H1120Q1186 1408 1233 1361Q1280 1314 1280 1248V1122Q1280 1109 1289 1100L1353 1036Q1368 1021 1388 1029Q1408 1037 1408 1058ZM1312 320 1600 608 928 1280H640V992ZM1756 452 1664 544 1376 256 1468 164Q1496 136 1536 136Q1576 136 1604 164L1756 316Q1784 344 1784 384Q1784 424 1756 452Z"/></svg> 修改</span><span class="btn b-red" style="width:49px"><svg class="fa" width="9.43" height="12" viewBox="0 0 1408 1792" style=""><path fill="#fff" d="M1270 1390 1134 1526Q1106 1554 1066 1554Q1026 1554 998 1526L704 1232L410 1526Q382 1554 342 1554Q302 1554 274 1526L138 1390Q110 1362 110 1322Q110 1282 138 1254L432 960L138 666Q110 638 110 598Q110 558 138 530L274 394Q302 366 342 366Q382 366 410 394L704 688L998 394Q1026 366 1066 366Q1106 366 1134 394L1270 530Q1298 558 1298 598Q1298 638 1270 666L976 960L1270 1254Q1298 1282 1298 1322Q1298 1362 1270 1390Z"/></svg> 删除</span></td></tr><tr><td class="c0"><svg class="nicon" width="40" height="24" viewBox="-20 -8.5 40 24"><circle r="7.6" fill="#eda35a"/><path fill="#fff" d="M-2.8,4.4 L-2.8,1.6 Q-5,0.6 -4.4,-1.6 Q-3.6,-3.6 -1.6,-3.2 Q0,-5.2 1.6,-3.2 Q3.6,-3.6 4.4,-1.6 Q5,0.6 2.8,1.6 L2.8,4.4 Z"/><text x="0" y="13.6" text-anchor="middle" font-size="4.8" fill="#333">怀旧系列</text></svg></td><td class="c1">导航5</td><td class="c2">Product.aspx</td><td class="c3">首页导航</td><td class="c4">5</td><td class="c5"><svg class="chk" width="20" height="20" viewBox="0 0 20 20"><rect width="20" height="20" rx="4.5" fill="#ecedef"/><polyline points="4.8,10.6 9,14.7 16,6.6" fill="none" stroke="#fff" stroke-width="2.3"/></svg></td><td class="c6"><span class="btn b-gray" style="width:52px"><svg class="fa" width="11.14" height="12" viewBox="0 0 1664 1792" style=""><path fill="#fff" d="M1611 971Q1611 1022 1574 1061L1499 1136Q1461 1174 1408 1174Q1354 1174 1318 1136L1024 843V1547Q1024 1599 986 1632Q949 1664 896 1664H768Q715 1664 678 1632Q640 1599 640 1547V843L346 1136Q310 1174 256 1174Q202 1174 166 1136L91 1061Q53 1023 53 971Q53 918 91 880L742 229Q777 192 832 192Q886 192 923 229L1574 880Q1611 919 1611 971Z"/></svg> 上移</span><span class="btn b-gray" style="width:51px"><svg class="fa" width="11.14" height="12" viewBox="0 0 1664 1792" style=""><path fill="#fff" d="M1611 832Q1611 885 1574 922L923 1574Q884 1611 832 1611Q779 1611 742 1574L91 922Q53 886 53 832Q53 779 91 741L165 666Q204 629 256 629Q309 629 346 666L640 960V256Q640 204 678 166Q716 128 768 128H896Q948 128 986 166Q1024 204 1024 256V960L1318 666Q1355 629 1408 629Q1460 629 1499 666L1574 741Q1611 780 1611 832Z"/></svg> 下移</span><span class="btn b-blue" style="width:53px"><svg class="fa" width="12.00" height="12" viewBox="0 0 1792 1792" style=""><path fill="#fff" d="M888 1184 1004 1068 852 916 736 1032V1088H832V1184ZM1295 465 945 815Q928 832 944 848Q960 864 977 847L1327 497Q1344 480 1328 464Q1312 448 1295 465ZM1408 1058V1248Q1408 1367 1324 1452Q1239 1536 1120 1536H288Q169 1536 84 1452Q0 1367 0 1248V416Q0 297 84 212Q169 128 288 128H1120Q1183 128 1237 153Q1252 160 1255 176Q1258 193 1246 205L1197 254Q1183 268 1165 262Q1142 256 1120 256H288Q222 256 175 303Q128 350 128 416V1248Q128 1314 175 1361Q222 1408 288 1408H1120Q1186 1408 1233 1361Q1280 1314 1280 1248V1122Q1280 1109 1289 1100L1353 1036Q1368 1021 1388 1029Q1408 1037 1408 1058ZM1312 320 1600 608 928 1280H640V992ZM1756 452 1664 544 1376 256 1468 164Q1496 136 1536 136Q1576 136 1604 164L1756 316Q1784 344 1784 384Q1784 424 1756 452Z"/></svg> 修改</span><span class="btn b-red" style="width:49px"><svg class="fa" width="9.43" height="12" viewBox="0 0 1408 1792" style=""><path fill="#fff" d="M1270 1390 1134 1526Q1106 1554 1066 1554Q1026 1554 998 1526L704 1232L410 1526Q382 1554 342 1554Q302 1554 274 1526L138 1390Q110 1362 110 1322Q110 1282 138 1254L432 960L138 666Q110 638 110 598Q110 558 138 530L274 394Q302 366 342 366Q382 366 410 394L704 688L998 394Q1026 366 1066 366Q1106 366 1134 394L1270 530Q1298 558 1298 598Q1298 638 1270 666L976 960L1270 1254Q1298 1282 1298 1322Q1298 1362 1270 1390Z"/></svg> 删除</span></td></tr><tr><td class="c0"><svg class="nicon" width="40" height="24" viewBox="-20 -8.5 40 24"><circle r="7.6" fill="#74c5e0"/><rect x="-3.8" y="-4.8" width="7.6" height="9.6" rx="1.8" fill="#a5dbec" stroke="#e4f4fa" stroke-width=".8"/><text x="0" y="13.6" text-anchor="middle" font-size="4.8" fill="#333">日用</text></svg></td><td class="c1">导航6</td><td class="c2">Product.aspx</td><td class="c3">首页导航</td><td class="c4">6</td><td class="c5"><svg class="chk" width="20" height="20" viewBox="0 0 20 20"><rect width="20" height="20" rx="4.5" fill="#ecedef"/><polyline points="4.8,10.6 9,14.7 16,6.6" fill="none" stroke="#fff" stroke-width="2.3"/></svg></td><td class="c6"><span class="btn b-gray" style="width:52px"><svg class="fa" width="11.14" height="12" viewBox="0 0 1664 1792" style=""><path fill="#fff" d="M1611 971Q1611 1022 1574 1061L1499 1136Q1461 1174 1408 1174Q1354 1174 1318 1136L1024 843V1547Q1024 1599 986 1632Q949 1664 896 1664H768Q715 1664 678 1632Q640 1599 640 1547V843L346 1136Q310 1174 256 1174Q202 1174 166 1136L91 1061Q53 1023 53 971Q53 918 91 880L742 229Q777 192 832 192Q886 192 923 229L1574 880Q1611 919 1611 971Z"/></svg> 上移</span><span class="btn b-gray" style="width:51px"><svg class="fa" width="11.14" height="12" viewBox="0 0 1664 1792" style=""><path fill="#fff" d="M1611 832Q1611 885 1574 922L923 1574Q884 1611 832 1611Q779 1611 742 1574L91 922Q53 886 53 832Q53 779 91 741L165 666Q204 629 256 629Q309 629 346 666L640 960V256Q640 204 678 166Q716 128 768 128H896Q948 128 986 166Q1024 204 1024 256V960L1318 666Q1355 629 1408 629Q1460 629 1499 666L1574 741Q1611 780 1611 832Z"/></svg> 下移</span><span class="btn b-blue" style="width:53px"><svg class="fa" width="12.00" height="12" viewBox="0 0 1792 1792" style=""><path fill="#fff" d="M888 1184 1004 1068 852 916 736 1032V1088H832V1184ZM1295 465 945 815Q928 832 944 848Q960 864 977 847L1327 497Q1344 480 1328 464Q1312 448 1295 465ZM1408 1058V1248Q1408 1367 1324 1452Q1239 1536 1120 1536H288Q169 1536 84 1452Q0 1367 0 1248V416Q0 297 84 212Q169 128 288 128H1120Q1183 128 1237 153Q1252 160 1255 176Q1258 193 1246 205L1197 254Q1183 268 1165 262Q1142 256 1120 256H288Q222 256 175 303Q128 350 128 416V1248Q128 1314 175 1361Q222 1408 288 1408H1120Q1186 1408 1233 1361Q1280 1314 1280 1248V1122Q1280 1109 1289 1100L1353 1036Q1368 1021 1388 1029Q1408 1037 1408 1058ZM1312 320 1600 608 928 1280H640V992ZM1756 452 1664 544 1376 256 1468 164Q1496 136 1536 136Q1576 136 1604 164L1756 316Q1784 344 1784 384Q1784 424 1756 452Z"/></svg> 修改</span><span class="btn b-red" style="width:49px"><svg class="fa" width="9.43" height="12" viewBox="0 0 1408 1792" style=""><path fill="#fff" d="M1270 1390 1134 1526Q1106 1554 1066 1554Q1026 1554 998 1526L704 1232L410 1526Q382 1554 342 1554Q302 1554 274 1526L138 1390Q110 1362 110 1322Q110 1282 138 1254L432 960L138 666Q110 638 110 598Q110 558 138 530L274 394Q302 366 342 366Q382 366 410 394L704 688L998 394Q1026 366 1066 366Q1106 366 1134 394L1270 530Q1298 558 1298 598Q1298 638 1270 666L976 960L1270 1254Q1298 1282 1298 1322Q1298 1362 1270 1390Z"/></svg> 删除</span></td></tr><tr><td class="c0"><svg class="nicon" width="40" height="24" viewBox="-20 -8.5 40 24"><circle r="7.6" fill="#78d680"/><path fill="#fff" opacity=".92" transform="rotate(-25)" d="M-5,-1 Q0,-3.6 5,-1 Q3.6,3.8 0,3.8 Q-3.6,3.8 -5,-1 Z"/><text x="0" y="13.6" text-anchor="middle" font-size="4.8" fill="#333">新鲜水果</text></svg></td><td class="c1">导航7</td><td class="c2">Product.aspx</td><td class="c3">首页导航</td><td class="c4">7</td><td class="c5"><svg class="chk" width="20" height="20" viewBox="0 0 20 20"><rect width="20" height="20" rx="4.5" fill="#ecedef"/><polyline points="4.8,10.6 9,14.7 16,6.6" fill="none" stroke="#fff" stroke-width="2.3"/></svg></td><td class="c6"><span class="btn b-gray" style="width:52px"><svg class="fa" width="11.14" height="12" viewBox="0 0 1664 1792" style=""><path fill="#fff" d="M1611 971Q1611 1022 1574 1061L1499 1136Q1461 1174 1408 1174Q1354 1174 1318 1136L1024 843V1547Q1024 1599 986 1632Q949 1664 896 1664H768Q715 1664 678 1632Q640 1599 640 1547V843L346 1136Q310 1174 256 1174Q202 1174 166 1136L91 1061Q53 1023 53 971Q53 918 91 880L742 229Q777 192 832 192Q886 192 923 229L1574 880Q1611 919 1611 971Z"/></svg> 上移</span><span class="btn b-gray" style="width:51px"><svg class="fa" width="11.14" height="12" viewBox="0 0 1664 1792" style=""><path fill="#fff" d="M1611 832Q1611 885 1574 922L923 1574Q884 1611 832 1611Q779 1611 742 1574L91 922Q53 886 53 832Q53 779 91 741L165 666Q204 629 256 629Q309 629 346 666L640 960V256Q640 204 678 166Q716 128 768 128H896Q948 128 986 166Q1024 204 1024 256V960L1318 666Q1355 629 1408 629Q1460 629 1499 666L1574 741Q1611 780 1611 832Z"/></svg> 下移</span><span class="btn b-blue" style="width:53px"><svg class="fa" width="12.00" height="12" viewBox="0 0 1792 1792" style=""><path fill="#fff" d="M888 1184 1004 1068 852 916 736 1032V1088H832V1184ZM1295 465 945 815Q928 832 944 848Q960 864 977 847L1327 497Q1344 480 1328 464Q1312 448 1295 465ZM1408 1058V1248Q1408 1367 1324 1452Q1239 1536 1120 1536H288Q169 1536 84 1452Q0 1367 0 1248V416Q0 297 84 212Q169 128 288 128H1120Q1183 128 1237 153Q1252 160 1255 176Q1258 193 1246 205L1197 254Q1183 268 1165 262Q1142 256 1120 256H288Q222 256 175 303Q128 350 128 416V1248Q128 1314 175 1361Q222 1408 288 1408H1120Q1186 1408 1233 1361Q1280 1314 1280 1248V1122Q1280 1109 1289 1100L1353 1036Q1368 1021 1388 1029Q1408 1037 1408 1058ZM1312 320 1600 608 928 1280H640V992ZM1756 452 1664 544 1376 256 1468 164Q1496 136 1536 136Q1576 136 1604 164L1756 316Q1784 344 1784 384Q1784 424 1756 452Z"/></svg> 修改</span><span class="btn b-red" style="width:49px"><svg class="fa" width="9.43" height="12" viewBox="0 0 1408 1792" style=""><path fill="#fff" d="M1270 1390 1134 1526Q1106 1554 1066 1554Q1026 1554 998 1526L704 1232L410 1526Q382 1554 342 1554Q302 1554 274 1526L138 1390Q110 1362 110 1322Q110 1282 138 1254L432 960L138 666Q110 638 110 598Q110 558 138 530L274 394Q302 366 342 366Q382 366 410 394L704 688L998 394Q1026 366 1066 366Q1106 366 1134 394L1270 530Q1298 558 1298 598Q1298 638 1270 666L976 960L1270 1254Q1298 1282 1298 1322Q1298 1362 1270 1390Z"/></svg> 删除</span></td></tr><tr><td class="c0"><svg class="nicon" width="40" height="24" viewBox="-20 -8.5 40 24"><circle r="7.6" fill="#6a9ab2"/><rect x="-4.4" y="-0.3" width="8.6" height="1.2" fill="#fff"/><path d="M-2,-2.2 Q1,-3.4 4.4,-2.6" stroke="#9dbccc" stroke-width=".5" fill="none"/><text x="0" y="13.6" text-anchor="middle" font-size="4.8" fill="#333">香烟代购</text></svg></td><td class="c1">导航8</td><td class="c2">Product.aspx</td><td class="c3">首页导航</td><td class="c4">8</td><td class="c5"><svg class="chk" width="20" height="20" viewBox="0 0 20 20"><rect width="20" height="20" rx="4.5" fill="#ecedef"/><polyline points="4.8,10.6 9,14.7 16,6.6" fill="none" stroke="#fff" stroke-width="2.3"/></svg></td><td class="c6"><span class="btn b-gray" style="width:52px"><svg class="fa" width="11.14" height="12" viewBox="0 0 1664 1792" style=""><path fill="#fff" d="M1611 971Q1611 1022 1574 1061L1499 1136Q1461 1174 1408 1174Q1354 1174 1318 1136L1024 843V1547Q1024 1599 986 1632Q949 1664 896 1664H768Q715 1664 678 1632Q640 1599 640 1547V843L346 1136Q310 1174 256 1174Q202 1174 166 1136L91 1061Q53 1023 53 971Q53 918 91 880L742 229Q777 192 832 192Q886 192 923 229L1574 880Q1611 919 1611 971Z"/></svg> 上移</span><span class="btn b-gray" style="width:51px"><svg class="fa" width="11.14" height="12" viewBox="0 0 1664 1792" style=""><path fill="#fff" d="M1611 832Q1611 885 1574 922L923 1574Q884 1611 832 1611Q779 1611 742 1574L91 922Q53 886 53 832Q53 779 91 741L165 666Q204 629 256 629Q309 629 346 666L640 960V256Q640 204 678 166Q716 128 768 128H896Q948 128 986 166Q1024 204 1024 256V960L1318 666Q1355 629 1408 629Q1460 629 1499 666L1574 741Q1611 780 1611 832Z"/></svg> 下移</span><span class="btn b-blue" style="width:53px"><svg class="fa" width="12.00" height="12" viewBox="0 0 1792 1792" style=""><path fill="#fff" d="M888 1184 1004 1068 852 916 736 1032V1088H832V1184ZM1295 465 945 815Q928 832 944 848Q960 864 977 847L1327 497Q1344 480 1328 464Q1312 448 1295 465ZM1408 1058V1248Q1408 1367 1324 1452Q1239 1536 1120 1536H288Q169 1536 84 1452Q0 1367 0 1248V416Q0 297 84 212Q169 128 288 128H1120Q1183 128 1237 153Q1252 160 1255 176Q1258 193 1246 205L1197 254Q1183 268 1165 262Q1142 256 1120 256H288Q222 256 175 303Q128 350 128 416V1248Q128 1314 175 1361Q222 1408 288 1408H1120Q1186 1408 1233 1361Q1280 1314 1280 1248V1122Q1280 1109 1289 1100L1353 1036Q1368 1021 1388 1029Q1408 1037 1408 1058ZM1312 320 1600 608 928 1280H640V992ZM1756 452 1664 544 1376 256 1468 164Q1496 136 1536 136Q1576 136 1604 164L1756 316Q1784 344 1784 384Q1784 424 1756 452Z"/></svg> 修改</span><span class="btn b-red" style="width:49px"><svg class="fa" width="9.43" height="12" viewBox="0 0 1408 1792" style=""><path fill="#fff" d="M1270 1390 1134 1526Q1106 1554 1066 1554Q1026 1554 998 1526L704 1232L410 1526Q382 1554 342 1554Q302 1554 274 1526L138 1390Q110 1362 110 1322Q110 1282 138 1254L432 960L138 666Q110 638 110 598Q110 558 138 530L274 394Q302 366 342 366Q382 366 410 394L704 688L998 394Q1026 366 1066 366Q1106 366 1134 394L1270 530Q1298 558 1298 598Q1298 638 1270 666L976 960L1270 1254Q1298 1282 1298 1322Q1298 1362 1270 1390Z"/></svg> 删除</span></td></tr><tr><td class="c0"><svg class="nicon" width="40" height="24" viewBox="-20 -8.5 40 24"><circle r="7.6" fill="#6a4248"/><path fill="#fff" d="M-0.7,-5.2 H0.7 V-2.2 Q1.8,-1.6 1.8,-0.4 V4.4 H-1.8 V-0.4 Q-1.8,-1.6 -0.7,-2.2 Z"/><rect x="-1.8" y="0.6" width="3.6" height="1.5" fill="#6a4248"/><text x="0" y="13.6" text-anchor="middle" font-size="4.8" fill="#333">粮油</text></svg></td><td class="c1">导航9</td><td class="c2">Product.aspx</td><td class="c3">首页导航</td><td class="c4">9</td><td class="c5"><svg class="chk" width="20" height="20" viewBox="0 0 20 20"><rect width="20" height="20" rx="4.5" fill="#ecedef"/><polyline points="4.8,10.6 9,14.7 16,6.6" fill="none" stroke="#fff" stroke-width="2.3"/></svg></td><td class="c6"><span class="btn b-gray" style="width:52px"><svg class="fa" width="11.14" height="12" viewBox="0 0 1664 1792" style=""><path fill="#fff" d="M1611 971Q1611 1022 1574 1061L1499 1136Q1461 1174 1408 1174Q1354 1174 1318 1136L1024 843V1547Q1024 1599 986 1632Q949 1664 896 1664H768Q715 1664 678 1632Q640 1599 640 1547V843L346 1136Q310 1174 256 1174Q202 1174 166 1136L91 1061Q53 1023 53 971Q53 918 91 880L742 229Q777 192 832 192Q886 192 923 229L1574 880Q1611 919 1611 971Z"/></svg> 上移</span><span class="btn b-gray" style="width:51px"><svg class="fa" width="11.14" height="12" viewBox="0 0 1664 1792" style=""><path fill="#fff" d="M1611 832Q1611 885 1574 922L923 1574Q884 1611 832 1611Q779 1611 742 1574L91 922Q53 886 53 832Q53 779 91 741L165 666Q204 629 256 629Q309 629 346 666L640 960V256Q640 204 678 166Q716 128 768 128H896Q948 128 986 166Q1024 204 1024 256V960L1318 666Q1355 629 1408 629Q1460 629 1499 666L1574 741Q1611 780 1611 832Z"/></svg> 下移</span><span class="btn b-blue" style="width:53px"><svg class="fa" width="12.00" height="12" viewBox="0 0 1792 1792" style=""><path fill="#fff" d="M888 1184 1004 1068 852 916 736 1032V1088H832V1184ZM1295 465 945 815Q928 832 944 848Q960 864 977 847L1327 497Q1344 480 1328 464Q1312 448 1295 465ZM1408 1058V1248Q1408 1367 1324 1452Q1239 1536 1120 1536H288Q169 1536 84 1452Q0 1367 0 1248V416Q0 297 84 212Q169 128 288 128H1120Q1183 128 1237 153Q1252 160 1255 176Q1258 193 1246 205L1197 254Q1183 268 1165 262Q1142 256 1120 256H288Q222 256 175 303Q128 350 128 416V1248Q128 1314 175 1361Q222 1408 288 1408H1120Q1186 1408 1233 1361Q1280 1314 1280 1248V1122Q1280 1109 1289 1100L1353 1036Q1368 1021 1388 1029Q1408 1037 1408 1058ZM1312 320 1600 608 928 1280H640V992ZM1756 452 1664 544 1376 256 1468 164Q1496 136 1536 136Q1576 136 1604 164L1756 316Q1784 344 1784 384Q1784 424 1756 452Z"/></svg> 修改</span><span class="btn b-red" style="width:49px"><svg class="fa" width="9.43" height="12" viewBox="0 0 1408 1792" style=""><path fill="#fff" d="M1270 1390 1134 1526Q1106 1554 1066 1554Q1026 1554 998 1526L704 1232L410 1526Q382 1554 342 1554Q302 1554 274 1526L138 1390Q110 1362 110 1322Q110 1282 138 1254L432 960L138 666Q110 638 110 598Q110 558 138 530L274 394Q302 366 342 366Q382 366 410 394L704 688L998 394Q1026 366 1066 366Q1106 366 1134 394L1270 530Q1298 558 1298 598Q1298 638 1270 666L976 960L1270 1254Q1298 1282 1298 1322Q1298 1362 1270 1390Z"/></svg> 删除</span></td></tr><tr><td class="c0"><svg class="nicon" width="40" height="24" viewBox="-20 -8.5 40 24"><circle r="7.6" fill="#b5323a"/><g fill="none" stroke="#fff" stroke-width=".9"><path d="M-4.4,-2 Q-4.4,-4.8 0,-4.8 Q4.4,-4.8 4.4,-2 Q4.8,2 2.4,4.2 Q0,5.6 -2.4,4.2 Q-4.8,2 -4.4,-2 Z"/><path d="M0,-2.2 L2.4,0.4 L0,3 L-2.4,0.4 Z"/><path d="M-3.4,-2.6 H3.4"/></g><text x="0" y="13.6" text-anchor="middle" font-size="4.8" fill="#333">土特产</text></svg></td><td class="c1">导航10</td><td class="c2">Product.aspx</td><td class="c3">首页导航</td><td class="c4">10</td><td class="c5"><svg class="chk" width="20" height="20" viewBox="0 0 20 20"><rect width="20" height="20" rx="4.5" fill="#ecedef"/><polyline points="4.8,10.6 9,14.7 16,6.6" fill="none" stroke="#fff" stroke-width="2.3"/></svg></td><td class="c6"><span class="btn b-gray" style="width:52px"><svg class="fa" width="11.14" height="12" viewBox="0 0 1664 1792" style=""><path fill="#fff" d="M1611 971Q1611 1022 1574 1061L1499 1136Q1461 1174 1408 1174Q1354 1174 1318 1136L1024 843V1547Q1024 1599 986 1632Q949 1664 896 1664H768Q715 1664 678 1632Q640 1599 640 1547V843L346 1136Q310 1174 256 1174Q202 1174 166 1136L91 1061Q53 1023 53 971Q53 918 91 880L742 229Q777 192 832 192Q886 192 923 229L1574 880Q1611 919 1611 971Z"/></svg> 上移</span><span class="btn b-gray" style="width:51px"><svg class="fa" width="11.14" height="12" viewBox="0 0 1664 1792" style=""><path fill="#fff" d="M1611 832Q1611 885 1574 922L923 1574Q884 1611 832 1611Q779 1611 742 1574L91 922Q53 886 53 832Q53 779 91 741L165 666Q204 629 256 629Q309 629 346 666L640 960V256Q640 204 678 166Q716 128 768 128H896Q948 128 986 166Q1024 204 1024 256V960L1318 666Q1355 629 1408 629Q1460 629 1499 666L1574 741Q1611 780 1611 832Z"/></svg> 下移</span><span class="btn b-blue" style="width:53px"><svg class="fa" width="12.00" height="12" viewBox="0 0 1792 1792" style=""><path fill="#fff" d="M888 1184 1004 1068 852 916 736 1032V1088H832V1184ZM1295 465 945 815Q928 832 944 848Q960 864 977 847L1327 497Q1344 480 1328 464Q1312 448 1295 465ZM1408 1058V1248Q1408 1367 1324 1452Q1239 1536 1120 1536H288Q169 1536 84 1452Q0 1367 0 1248V416Q0 297 84 212Q169 128 288 128H1120Q1183 128 1237 153Q1252 160 1255 176Q1258 193 1246 205L1197 254Q1183 268 1165 262Q1142 256 1120 256H288Q222 256 175 303Q128 350 128 416V1248Q128 1314 175 1361Q222 1408 288 1408H1120Q1186 1408 1233 1361Q1280 1314 1280 1248V1122Q1280 1109 1289 1100L1353 1036Q1368 1021 1388 1029Q1408 1037 1408 1058ZM1312 320 1600 608 928 1280H640V992ZM1756 452 1664 544 1376 256 1468 164Q1496 136 1536 136Q1576 136 1604 164L1756 316Q1784 344 1784 384Q1784 424 1756 452Z"/></svg> 修改</span><span class="btn b-red" style="width:49px"><svg class="fa" width="9.43" height="12" viewBox="0 0 1408 1792" style=""><path fill="#fff" d="M1270 1390 1134 1526Q1106 1554 1066 1554Q1026 1554 998 1526L704 1232L410 1526Q382 1554 342 1554Q302 1554 274 1526L138 1390Q110 1362 110 1322Q110 1282 138 1254L432 960L138 666Q110 638 110 598Q110 558 138 530L274 394Q302 366 342 366Q382 366 410 394L704 688L998 394Q1026 366 1066 366Q1106 366 1134 394L1270 530Q1298 558 1298 598Q1298 638 1270 666L976 960L1270 1254Q1298 1282 1298 1322Q1298 1362 1270 1390Z"/></svg> 删除</span></td></tr></tbody></table></div></div><div class="footer"><span class="fl"><b>Copyright © 2021 <span class="lk">MojoCube</span>.</b> All rights reserved.</span><span class="fr">2021年07月03日, 星期六</span><span class="wm1">懒人源码网</span><span class="wm2">www.5Lanren.com</span></div></div></body></html>
